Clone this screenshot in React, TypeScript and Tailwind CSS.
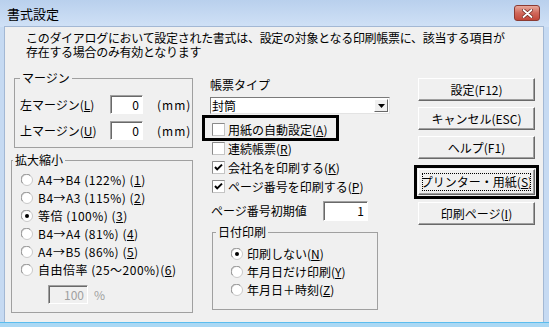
import React from "react";

const Radio = ({ checked }: { checked?: boolean }) => (
  <svg width="12" height="12" viewBox="0 0 12 12" className="shrink-0">
    <circle cx="6" cy="6" r="5.5" fill="#fff" stroke="#c8c8c8" />
    <path d="M1.6 9.2 A5.2 5.2 0 0 1 9.2 1.6" fill="none" stroke="#8a8a8a" />
    {checked && <circle cx="6" cy="6" r="2" fill="#000" />}
  </svg>
);

const Check = ({ checked }: { checked?: boolean }) => (
  <svg width="13" height="13" viewBox="0 0 13 13" className="shrink-0">
    <rect x="0.5" y="0.5" width="12" height="12" fill="#fff" stroke="#c4c4c4" />
    <path d="M0.5 12.5 V0.5 H12.5" fill="none" stroke="#8a8a8a" />
    {checked && (
      <path d="M3 6 L5.2 8.4 L10 3.6" fill="none" stroke="#000" strokeWidth="2" />
    )}
  </svg>
);

const Field = ({ value, className, disabled }: { value: string; className: string; disabled?: boolean }) => (
  <div
    className={
      "flex items-center justify-end pr-[3px] border border-t-[#a0a0a0] border-l-[#a0a0a0] border-r-white border-b-white shadow-[inset_1px_1px_0_#696969] " +
      (disabled ? "bg-[#f0f0f0] text-[#a0a0a0] " : "bg-white ") +
      className
    }
  >
    {value}
  </div>
);

const Btn = ({ children, className }: { children: React.ReactNode; className: string }) => (
  <div
    className={
      "h-[23px] flex items-center justify-center bg-[#f0f0f0] border border-t-white border-l-white border-r-[#696969] border-b-[#696969] shadow-[inset_-1px_-1px_0_#a0a0a0] " +
      className
    }
  >
    {children}
  </div>
);

const MarginRow = ({ label, k }: { label: string; k: string }) => (
  <div className="flex items-center">
    <span className="w-[90px] shrink-0">
      {label}(<u>{k}</u>)
    </span>
    <Field value="0" className="w-[33px] h-[19px]" />
    <span className="ml-[14px] tracking-[1px]">(mm)</span>
  </div>
);

const scales: [string, string, boolean][] = [
  ["A4→B4 (122%) ", "1", false],
  ["B4→A3 (115%) ", "2", false],
  ["等倍 (100%) ", "3", true],
  ["B4→A4 (81%) ", "4", false],
  ["A4→B5 (86%) ", "5", false],
  ["自由倍率 (25～200%)", "6", false],
];

const checks: [string, string, boolean][] = [
  ["用紙の自動設定", "A", false],
  ["連続帳票", "R", false],
  ["会社名を印刷する", "K", true],
  ["ページ番号を印刷する", "P", true],
];

const dates: [string, string, boolean][] = [
  ["印刷しない", "N", true],
  ["年月日だけ印刷", "Y", false],
  ["年月日＋時刻", "Z", false],
];

export default function App() {
  return (
    <div className="w-[549px] h-[327px] flex flex-col overflow-hidden bg-[#c6daf2] text-black text-[12px] leading-[14px] font-['Noto_Sans_CJK_JP',sans-serif]">
      {/* title bar */}
      <div className="h-[27px] shrink-0 flex items-start pl-[7px] pr-[9px] bg-gradient-to-b from-[#b9d0ed] to-[#d0e1f6]">
        <span className="mt-[6px] text-[13px] leading-[16px]">書式設定</span>
        <div className="ml-auto mt-[5px] w-[26px] h-[16px] rounded-[3px] border border-[#8b3a32] bg-gradient-to-b from-[#e7a99c] via-[#d0675a] to-[#c2473a] flex items-center justify-center">
          <svg width="11" height="9" viewBox="0 0 11 9">
            <path d="M1.5 1 L9.5 8 M9.5 1 L1.5 8" stroke="#6e2a22" strokeWidth="3.4" strokeLinecap="round" />
            <path d="M1.5 1 L9.5 8 M9.5 1 L1.5 8" stroke="#fff" strokeWidth="1.8" strokeLinecap="round" />
          </svg>
        </div>
      </div>

      {/* client */}
      <div className="h-[295px] shrink-0 ml-[5px] mr-[6px] bg-[#f0f0f0] shadow-[0_0_0_1px_#a3b8d4] flex flex-col">
        <p className="pl-[21px] pt-[4px] pb-[1px] leading-[14px] tracking-[-0.3px]">
          このダイアログにおいて設定された書式は、設定の対象となる印刷帳票に、該当する項目が
          <br />
          存在する場合のみ有効となります
        </p>

        <div className="flex items-start">
          {/* left column */}
          <div className="ml-[6px] w-[182px] shrink-0 flex flex-col">
            <fieldset className="mt-[11px] ml-[3px] w-[179px] h-[77px] border border-[#a0a0a0]">
              <legend className="ml-[5px] px-[2px] leading-[14px]">マージン</legend>
              <div className="pl-[5px] pt-[10px] flex flex-col gap-[7px]">
                <MarginRow label="左マージン" k="L" />
                <MarginRow label="上マージン" k="U" />
              </div>
            </fieldset>

            <fieldset className="mt-[5px] w-[182px] h-[160px] border border-[#a0a0a0]">
              <legend className="ml-[1px] px-[2px] leading-[14px]">拡大縮小</legend>
              <div className="pl-[9px] pt-[4px] flex flex-col">
                {scales.map(([t, k, c]) => (
                  <div key={k} className="h-[18px] flex items-center gap-[5px]">
                    <Radio checked={c} />
                    <span className="tracking-[0.5px]">
                      {t}(<u>{k}</u>)
                    </span>
                  </div>
                ))}
                <div className="mt-[6px] ml-[27px] flex items-center">
                  <Field value="100" disabled className="w-[40px] h-[19px]" />
                  <span className="ml-[6px] text-[#a0a0a0]">%</span>
                </div>
              </div>
            </fieldset>
          </div>

          {/* middle column */}
          <div className="ml-[17px] w-[180px] shrink-0 flex flex-col">
            <div className="mt-[18px]">帳票タイプ</div>
            <div className="mt-[5px] h-[17px] flex items-center bg-white border border-t-[#7a7a7a] border-l-[#7a7a7a] border-r-[#e3e3e3] border-b-[#e3e3e3]">
              <span className="pl-[1px]">封筒</span>
              <div className="ml-auto mr-[1px] w-[14px] h-[13px] bg-[#f0f0f0] border border-t-white border-l-white border-r-[#696969] border-b-[#696969] flex items-center justify-center">
                <svg width="7" height="4" viewBox="0 0 7 4">
                  <path d="M0 0 H7 L3.5 4 Z" fill="#000" />
                </svg>
              </div>
            </div>

            <div className="mt-[6px] flex flex-col">
              {checks.map(([t, k, c], i) => (
                <div key={k} className="relative h-[19px] flex items-center pl-[2px] gap-[3px]">
                  <Check checked={c} />
                  <span>
                    {t}(<u>{k}</u>)
                  </span>
                  {i === 0 && (
                    <div className="absolute -left-[8px] -top-[5px] w-[137px] h-[26px] border-[3px] border-black" />
                  )}
                </div>
              ))}
            </div>

            <div className="mt-[5px] h-[20px] flex items-center pl-[1px]">
              <span className="w-[112px] shrink-0">ページ番号初期値</span>
              <Field value="1" className="w-[45px] h-[20px]" />
            </div>

            <fieldset className="mt-[4px] ml-[2px] w-[166px] h-[85px] border border-[#a0a0a0]">
              <legend className="ml-[3px] px-[2px] leading-[14px]">日付印刷</legend>
              <div className="pl-[18px] pt-[6px] flex flex-col">
                {dates.map(([t, k, c]) => (
                  <div key={k} className="h-[18px] flex items-center gap-[4px]">
                    <Radio checked={c} />
                    <span>
                      {t}(<u>{k}</u>)
                    </span>
                  </div>
                ))}
              </div>
            </fieldset>
          </div>

          {/* right column */}
          <div className="ml-[28px] w-[117px] shrink-0 flex flex-col">
            <Btn className="mt-[18px]">設定(F12)</Btn>
            <Btn className="mt-[6px]">キャンセル(ESC)</Btn>
            <Btn className="mt-[6px]">ヘルプ(F1)</Btn>
            <div className="mt-[6px] -mx-[4px] h-[34px] border-[3px] border-black p-[1px]">
              <div className="h-[26px] p-[3px] bg-[#f0f0f0] border border-t-white border-l-white border-r-[#696969] border-b-[#696969] shadow-[inset_-1px_-1px_0_#a0a0a0]">
                <div className="h-full border border-dotted border-black flex items-center justify-center overflow-hidden whitespace-nowrap">
                  プリンター・用紙(<u>S</u>)
                </div>
              </div>
            </div>
            <Btn className="mt-[3px]">
              <span>
                印刷ページ(<u>I</u>)
              </span>
            </Btn>
          </div>
        </div>
      </div>

      {/* bottom frame */}
      <div className="flex-1 mx-0 border-t border-[#5bbdee] bg-[#aad8f4]" />
    </div>
  );
}
